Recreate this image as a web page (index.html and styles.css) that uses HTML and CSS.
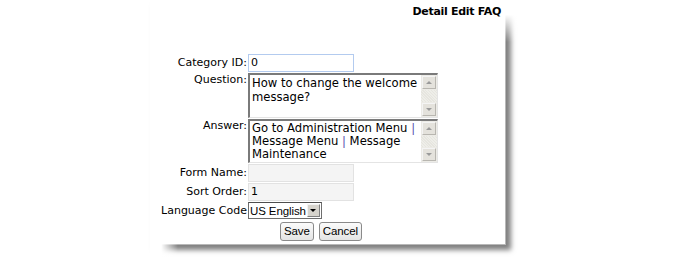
FILE: index.html
```html
<!DOCTYPE html>
<html>
<head>
<meta charset="utf-8">
<link rel="stylesheet" href="styles.css">
</head>
<body>
<div class="panel">
  <div class="title">Detail Edit FAQ</div>
  <div class="form">
    <div class="lbl">Category ID:</div>
    <div class="fld"><div class="inp inp-blue">0</div></div>

    <div class="lbl lbl-top">Question:</div>
    <div class="fld">
      <div class="ta ta-q">
        <div class="ta-text">How to change the welcome message?</div>
        <div class="sb"><div class="sb-btn"><span class="up"></span></div><div class="sb-track"></div><div class="sb-btn"><span class="dn"></span></div></div>
      </div>
    </div>

    <div class="lbl lbl-top">Answer:</div>
    <div class="fld">
      <div class="ta ta-a">
        <div class="ta-text ta-tight">Go to Administration Menu <span class="bar">|</span> Message Menu <span class="bar">|</span> Message Maintenance</div>
        <div class="sb"><div class="sb-btn"><span class="up"></span></div><div class="sb-track"></div><div class="sb-btn"><span class="dn"></span></div></div>
      </div>
    </div>

    <div class="lbl">Form Name:</div>
    <div class="fld"><div class="inp inp-grey"></div></div>

    <div class="lbl">Sort Order:</div>
    <div class="fld"><div class="inp inp-grey">1</div></div>

    <div class="lbl">Language Code</div>
    <div class="fld"><div class="sel"><span class="sel-text">US English</span><span class="sel-btn"><span class="dn"></span></span></div></div>

    <div class="lbl"></div>
    <div class="fld btns"><span class="btn">Save</span><span class="btn">Cancel</span></div>
  </div>
</div>
</body>
</html>
```
FILE: styles.css
```css
html, body { margin: 0; padding: 0; background: #fff; }
body { font-family: "DejaVu Sans", Verdana, sans-serif; font-size: 11px; color: #000; width: 675px; height: 262px; overflow: hidden; }
.panel {
  position: relative;
  margin-left: 150px;
  width: 355px;
  height: 244px;
  background: #fff;
  border-right: 1px solid #b8b8b8;
  border-bottom: 1px solid #b8b8b8;
  box-shadow: 5px 5px 5px rgba(0,0,0,0.5);
}
.panel::after {
  content: "";
  position: absolute;
  right: -13px; top: 0;
  width: 13px; height: 42px;
  background: linear-gradient(#fff 35%, rgba(255,255,255,0));
}
.panel::before {
  content: "";
  position: absolute;
  left: 0; bottom: -13px;
  width: 28px; height: 13px;
  background: linear-gradient(90deg, #fff 40%, rgba(255,255,255,0));
}
.title {
  text-align: right;
  font-weight: bold;
  font-size: 11px;
  letter-spacing: -0.3px;
  padding: 5px 4px 0 0;
  height: 49px;
}
.form {
  display: grid;
  grid-template-columns: 98px auto;
  row-gap: 1px;
}
.lbl { text-align: right; padding-right: 1px; line-height: 17px; white-space: nowrap; }
.lbl-top { line-height: 13px; padding-top: 0; }
.fld { display: flex; }
.inp {
  box-sizing: border-box;
  width: 106px; height: 18px;
  padding: 0 2px;
  line-height: 16px;
}
.inp-blue { border: 1px solid #b3cbef; background: #fff; }
.inp-grey { border: 1px solid #e2e2e2; background: #f4f4f4; }
.ta {
  box-sizing: border-box;
  width: 190px;
  display: flex;
  border-top: 2px solid #7a7a7a;
  border-left: 2px solid #7a7a7a;
  border-right: 1px solid #e4e4e4;
  border-bottom: 1px solid #e4e4e4;
  background: #fff;
}
.ta-q { height: 45px; }
.ta-a { height: 44px; }
.ta-text { flex: 1; padding: 1px 2px; line-height: 14px; font-size: 11.6px; }
.ta-tight { line-height: 13px; padding-top: 1px; }
.bar { color: #5a4fb0; display: inline-block; line-height: 13px; height: 13px; overflow: hidden; vertical-align: top; }
.sb { width: 16px; display: flex; flex-direction: column; background: #ecebe6; }
.sb-track { flex: 1; background: repeating-linear-gradient(45deg, #eeeee9 0 1px, #e6e5df 1px 2px); }
.sb-btn {
  height: 13px; width: 14px;
  margin: 1px;
  background: #e4e2dc;
  border: 1px solid #f4f4f4;
  border-right-color: #b8b6b0;
  border-bottom-color: #b8b6b0;
  box-sizing: border-box;
  display: flex; align-items: center; justify-content: center;
}
.up { width: 0; height: 0; border-left: 3px solid transparent; border-right: 3px solid transparent; border-bottom: 3px solid #9a9a9a; }
.dn { width: 0; height: 0; border-left: 3px solid transparent; border-right: 3px solid transparent; border-top: 3px solid #9a9a9a; }
.sel {
  box-sizing: border-box;
  height: 17px;
  display: flex; align-items: center;
  border: 1px solid #6e6e6e;
  border-top-color: #4e4e4e;
  font-family: "Liberation Sans", Arial, sans-serif;
  font-size: 11.5px;
  letter-spacing: -0.1px;
  background: #fff;
}
.sel-text { padding: 0 1px 0 1px; }
.sel-btn {
  width: 13px; height: 13px; margin-right: 1px;
  box-sizing: border-box;
  background: #d6d3cc;
  border: 1px solid #f2f2f2;
  border-right-color: #808080;
  border-bottom-color: #808080;
  display: flex; align-items: center; justify-content: center;
}
.sel-btn .dn { border-top-color: #000; }
.btns { padding-left: 32px; padding-top: 2px; gap: 5px; }
.btn {
  box-sizing: border-box;
  height: 19px;
  padding: 0 3px;
  font-family: "Liberation Sans", Arial, sans-serif;
  font-size: 11.5px;
  letter-spacing: -0.1px;
  line-height: 17px;
  border: 1px solid #8a8a8a;
  border-radius: 3px;
  background: linear-gradient(#fbfbfb, #e4e4e4);
}
```
